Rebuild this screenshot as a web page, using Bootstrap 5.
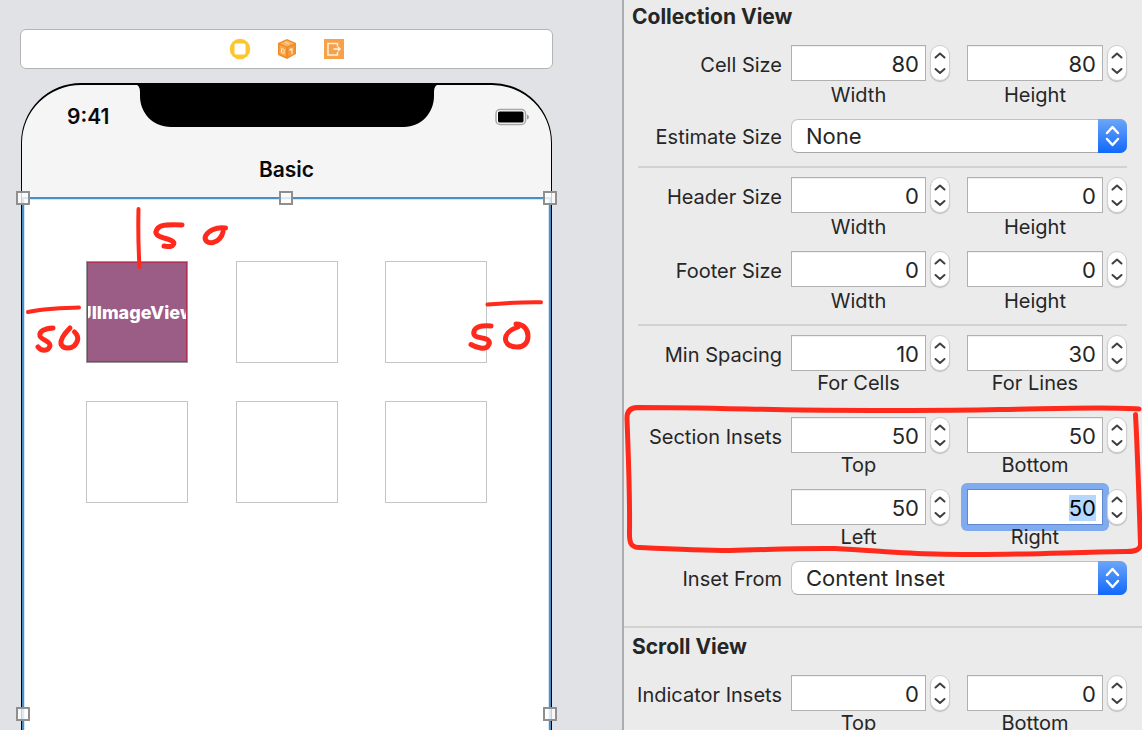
<!DOCTYPE html>
<html lang="en">
<head>
<meta charset="utf-8">
<meta name="viewport" content="width=device-width, initial-scale=1">
<title>Size Inspector</title>
<link href="https://cdn.jsdelivr.net/npm/bootstrap@5.3.0/dist/css/bootstrap.min.css" rel="stylesheet">
<style>
  body { font-family: Inter, "Liberation Sans", sans-serif; color: #262626; background: #e1e2e6; }
  .canvas { padding: 29px 69px 0 20px; background: #e1e2e6; }
  .scene-dock { height: 40px; gap: 26px; background: #fff; border: 1px solid #b4b4b4; border-radius: 6px; }
  .scene-dock .btn { line-height: 0; }
  .device { margin: 14px 1px 0; height: 1200px; background: #f5f5f5; border: 1px solid #000; border-top-width: 2px; border-radius: 60px 60px 0 0; color: #0a0a0a; }
  .status { height: 62px; padding: 2px 21px 0 45px; }
  .clock { font-size: 21px; font-weight: 600; line-height: 24px; }
  .notch { top: -1px; left: 50%; width: 304px; height: 43px; transform: translateX(-50%); }
  .nav-title { height: 50px; font-size: 21px; line-height: 46px; font-weight: 600; }
  .collection { height: 1036px; background: #fff; border: 2px solid #4b8fc7; box-shadow: inset 0 0 0 1px #d3e4f3; padding: 62px 62px 0; }
  .cells { display: grid; grid-template-columns: repeat(3, 102px); justify-content: space-between; row-gap: 38px; }
  .tile { height: 102px; border: 1px solid #c4c4c4; }
  .image-view { display: flex; align-items: center; justify-content: center; overflow: hidden; background: #9b5c86; border: 2px solid #aa3154; outline: 1px solid #999; outline-offset: -1px; color: #fff; font-size: 18px; font-weight: 800; }
  .grip { position: absolute; width: 14px; height: 14px; margin: -1px 0 0 -1px; border: 2px solid #8f8f8f; background: rgba(255,255,255,.8); transform: translate(-50%, -50%); }
  .grip.start-100 { margin-left: 1px; }
  .ink { fill: none; stroke: #ff2a1c; stroke-linecap: round; stroke-linejoin: round; pointer-events: none; overflow: visible; }

  .inspector { flex: 0 0 520px; background: #ebebeb; border-left: 2px solid #adadad; }
  .group-title { margin: 0 0 11px; padding-left: 8px; font-size: 21px; line-height: 34px; font-weight: 700; }
  .group-title.next { padding-top: 2px; }
  .prop { display: grid; grid-template-columns: 158px minmax(0, 168fr) minmax(0, 177fr); padding-right: 15px; }
  .prop > .name { font-size: 20px; line-height: 40px; height: 34px; text-align: right; white-space: nowrap; }
  .prop > label.name { line-height: 36px; }
  .prop > .pair { margin-left: 9px; }
  .prop > .pair + .pair { margin-left: 17px; }
  .prop > .menu { grid-column: 2 / 4; margin-left: 9px; }
  .pair { display: grid; grid-template-columns: 1fr 20px; column-gap: 4px; }
  .num { width: 100%; min-width: 0; height: 36px; padding: 2px 6px 0 0; border: 1px solid #b0b0b0; border-radius: 0; background: #fff; color: #262626; font-size: 22px; line-height: 32px; text-align: right; box-shadow: inset 0 1px 0 #f0f0f0; }
  .num::selection { background: #b3d7ff; color: #000; }
  .halo { position: relative; }
  .halo::before { content: ""; position: absolute; inset: -6px; border-radius: 6px; background: #80abee; }
  .halo .num { position: relative; border-color: #5f86cf; outline: 0; box-shadow: none; }
  .caption { font-size: 20px; line-height: 28px; text-align: center; }
  .tight .caption { line-height: 24px; }
  .step { position: relative; height: 36px; border: 1px solid #cfcfcf; border-radius: 10px; background: #fff; box-shadow: 0 1px 1px #bbb; overflow: hidden; }
  .step button { display: block; width: 100%; height: 17px; padding: 0; border: 0; background: none; line-height: 0; }
  .step svg { fill: none; stroke: #404040; stroke-width: 2; stroke-linecap: round; stroke-linejoin: round; }
  .menu { position: relative; }
  .menu select { appearance: none; width: 100%; height: 34px; padding: 0 40px 0 14px; border: 1px solid #c2c2c2; border-bottom-color: #a8a8a8; border-radius: 7px; background: #fff; color: #262626; font-size: 22px; line-height: 32px; }
  .menu .cap { position: absolute; top: 0; right: 0; width: 29px; height: 34px; border-radius: 0 7px 7px 0; background: linear-gradient(#6ca6f8, #1168fb); pointer-events: none; }
  .rule { height: 2px; margin: 9px 15px 9px 14px; background: #d2d2d2; }
  .rule.first { margin-top: 13px; }
  .rule.insets { margin-top: 13px; margin-bottom: 7px; }
  .rule.end { margin: 31px 0 0; }
  .gap-row { margin-bottom: 10px; }
  .gap-inset { margin-bottom: 12px; }
</style>
</head>
<body>
<main class="d-flex vh-100 overflow-hidden">
  <section class="canvas flex-grow-1 position-relative overflow-hidden" aria-label="Canvas">
    <div class="scene-dock d-flex justify-content-center align-items-center">
      <button class="btn p-0 border-0" aria-label="View controller"><svg width="22" height="22"><circle cx="11" cy="11" r="10.3" fill="#fec62e"/><rect x="5.5" y="5.5" width="11" height="11" rx="1.5" fill="#fff"/></svg></button>
      <button class="btn p-0 border-0" aria-label="First responder"><svg width="20" height="22"><path d="M10 1l9 4v11l-9 5-9-4V5z" fill="#f08c26"/><path d="M10 2.500l7 3-7 3-7-3z" fill="#f9b566"/><path d="M2.500 7l6.500 2.500v9L2.500 16z" fill="#f7a750"/><path d="M11 9.500L17.500 7v9L11 19z" fill="#f39a3c"/><path d="M4.500 10.500l2.500 1v4l-2.500-1zM8 4l4 2" fill="none" stroke="#fde3c4"/><path d="M12.500 11l3-1v6l-1 .5v-4l-2 0z" fill="#fff1df"/></svg></button>
      <button class="btn p-0 border-0" aria-label="Exit"><svg width="22" height="20"><path d="M1 0h20v20H1z" fill="#f7a24b"/><path d="M14.500 7.500V4.500H5v11.500H14.500V13M10.500 10H17M15 8l2 2-2 2" fill="none" stroke="#fff0dd" stroke-width="1.500"/></svg></button>
    </div>

    <div class="device position-relative">
      <svg class="notch position-absolute" viewBox="0 0 304 43"><path d="M0 0H304Q299 1 299 8V12C299 29 286 43 269 43H36C18 43 5 29 5 12V8Q5 1 0 0z"/></svg>
      <div class="status d-flex justify-content-between align-items-center">
        <span class="clock">9:41</span>
        <svg width="35" height="18" role="img" aria-label="Battery full"><rect x="1" y="1.500" width="29.500" height="15" rx="4" fill="#fff" stroke="#a6a6a6" stroke-width="1.500"/><rect x="3" y="3.500" width="25.500" height="11" rx="1.500"/><path d="M32 6.500q2 1 2 2.500t-2 2.500z" fill="#999"/></svg>
      </div>
      <div class="nav-title text-center">Basic</div>
      <div class="collection position-relative">
        <div class="cells">
          <div class="tile image-view">UIImageView</div>
          <div class="tile"></div><div class="tile"></div>
          <div class="tile"></div><div class="tile"></div><div class="tile"></div>
        </div>
        <span class="grip top-0 start-0"></span><span class="grip top-0 start-50"></span><span class="grip top-0 start-100"></span>
        <span class="grip top-50 start-0"></span><span class="grip top-50 start-100"></span>
      </div>
    </div>

    <svg class="ink position-absolute top-0 start-0" width="620" height="730" stroke-width="5" aria-hidden="true">
      <path stroke-width="4" d="M138.500 209C138 230 138.500 250 139.500 267"/>
      <path d="M182 225C170 224.500 161 224.500 158 228C153 234 158 236.500 164 238C171 239.500 175 242 173.500 244.500C172 247.500 168 246.500 164 246"/>
      <path d="M225.500 228C215 227 208 231 205.500 236C204 241 208 243.500 213 242.500C218 241.500 222 237 223 232"/>
      <path stroke-width="4" d="M28 312C45 308 60 308 79 307.500"/>
      <path d="M53 328C45 328.500 39 331 40 336C41 340 51 341 50 346C48 352 41 351 38 347"/>
      <path d="M70 328C64 334 60 339 61 344C63 349 70 349 74 346C79 341 79 336 74.500 332"/>
      <path stroke-width="4" d="M487.500 304.500C505 303 522 302 541 302.300"/>
      <path d="M491 326C484 325.500 477 326 474.500 330C472 336 476 337 482 338C489 339 491 342 488 346C485 350 477 348 471 344.500"/>
      <path d="M516 324C524 324 528 330 528 336C528 343 524 347 517 347C508 347 504 342 506 336C508 331 512 329 518 327"/>
    </svg>
  </section>

  <aside class="inspector" aria-label="Size inspector">
    <h2 class="group-title">Collection View</h2>
    <div class="prop gap-row">
      <span class="name">Cell Size</span>
      <div class="pair"><input class="num" id="cw" value="80"><span class="step"></span><label class="caption" for="cw">Width</label></div>
      <div class="pair"><input class="num" id="ch" value="80"><span class="step"></span><label class="caption" for="ch">Height</label></div>
    </div>
    <div class="prop">
      <label class="name" for="est">Estimate Size</label>
      <div class="menu"><select id="est"><option>None</option><option>Automatic</option></select><span class="cap"></span></div>
    </div>
    <div class="rule first"></div>
    <div class="prop gap-row">
      <span class="name">Header Size</span>
      <div class="pair"><input class="num" id="hw" value="0"><span class="step"></span><label class="caption" for="hw">Width</label></div>
      <div class="pair"><input class="num" id="hh" value="0"><span class="step"></span><label class="caption" for="hh">Height</label></div>
    </div>
    <div class="prop">
      <span class="name">Footer Size</span>
      <div class="pair"><input class="num" id="fw" value="0"><span class="step"></span><label class="caption" for="fw">Width</label></div>
      <div class="pair"><input class="num" id="fh" value="0"><span class="step"></span><label class="caption" for="fh">Height</label></div>
    </div>
    <div class="rule"></div>
    <div class="prop tight">
      <span class="name">Min Spacing</span>
      <div class="pair"><input class="num" id="mc" value="10"><span class="step"></span><label class="caption" for="mc">For Cells</label></div>
      <div class="pair"><input class="num" id="ml" value="30"><span class="step"></span><label class="caption" for="ml">For Lines</label></div>
    </div>
    <div class="rule insets"></div>
    <div class="position-relative tight gap-inset">
      <div class="prop gap-inset">
        <span class="name">Section Insets</span>
        <div class="pair"><input class="num" id="st" value="50"><span class="step"></span><label class="caption" for="st">Top</label></div>
        <div class="pair"><input class="num" id="sb" value="50"><span class="step"></span><label class="caption" for="sb">Bottom</label></div>
      </div>
      <div class="prop">
        <span class="name"></span>
        <div class="pair"><input class="num" id="sl" value="50"><span class="step"></span><label class="caption" for="sl">Left</label></div>
        <div class="pair"><span class="halo"><input class="num" id="sr" value="50"></span><span class="step"></span><label class="caption position-relative" for="sr">Right</label></div>
      </div>
      <svg class="ink position-absolute start-0 top-0 w-100 h-100" viewBox="624 417 518 132" stroke-width="5" aria-hidden="true"><path d="M1139 409C1110 406.500 1060 408.500 1000 409.500C930 411 860 410.500 800 410C740 409 690 407.500 637 407.500Q627 408 627 418C628 450 630 490 629.500 530C629 544 631 547.500 640 547.500C670 549 700 550.500 730 550.500C765 550 790 548 835 548.500C870 550 900 553.500 935 554C1000 556 1060 552.500 1125 551.500Q1141 552 1140.500 544C1139 500 1137.500 450 1135.500 414.500"/></svg>
    </div>
    <div class="prop">
      <label class="name" for="inf">Inset From</label>
      <div class="menu"><select id="inf"><option>Content Inset</option><option>Safe Area</option></select><span class="cap"></span></div>
    </div>
    <div class="rule end"></div>
    <h2 class="group-title next">Scroll View</h2>
    <div class="prop tight">
      <span class="name">Indicator Insets</span>
      <div class="pair"><input class="num" id="it" value="0"><span class="step"></span><label class="caption" for="it">Top</label></div>
      <div class="pair"><input class="num" id="ib" value="0"><span class="step"></span><label class="caption" for="ib">Bottom</label></div>
    </div>
  </aside>
</main>
<script src="https://cdn.jsdelivr.net/npm/bootstrap@5.3.0/dist/js/bootstrap.bundle.min.js"></script>
<script>
  document.querySelectorAll('.step').forEach(function (s) {
    s.innerHTML = '<button type="button" aria-label="Increase"><svg width="18" height="17"><path d="M4.500 11.500L9 7.500l4.500 4"/></svg></button>' +
      '<button type="button" aria-label="Decrease"><svg width="18" height="17"><path d="M4.500 6L9 10l4.500-4"/></svg></button>';
    s.querySelectorAll('button').forEach(function (b, i) {
      b.addEventListener('click', function () {
        var f = s.parentElement.querySelector('input');
        f.value = Number(f.value) + (i ? -1 : 1);
      });
    });
  });
  document.querySelectorAll('.cap').forEach(function (c) {
    c.innerHTML = '<svg class="d-block" width="29" height="34" fill="none" stroke="#fff" stroke-width="2.500" stroke-linecap="round" stroke-linejoin="round"><path d="M9 14l5.500-6 5.500 6M9 20l5.500 6 5.500-6"/></svg>';
  });
  var field = document.getElementById('sr');
  field.focus();
  field.select();
</script>
</body>
</html>
